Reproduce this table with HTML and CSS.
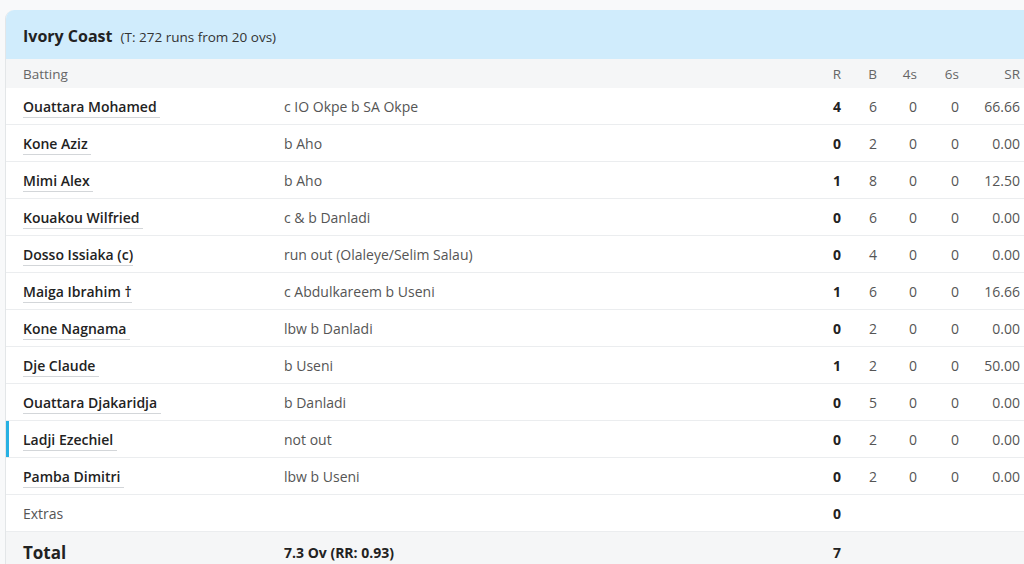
FILE: index.html
```html
<!DOCTYPE html>
<html lang="en">

<head>
    <meta charset="UTF-8">
    <meta name="viewport" content="width=device-width, initial-scale=1.0">
    <link rel="stylesheet" href="styles.css">
</head>

<body>
    <div class="card">
        <div class="card-head">
            <span class="team">Ivory Coast</span>
            <span class="target">(T: 272 runs from 20 ovs)</span>
        </div>
        <table class="score">
            <thead>
                <tr>
                    <th class="name">Batting</th>
                    <th class="how"></th>
                    <th class="r">R</th>
                    <th class="b">B</th>
                    <th class="f">4s</th>
                    <th class="s">6s</th>
                    <th class="sr">SR</th>
                </tr>
            </thead>
            <tbody>
                <tr>
                    <td class="name"><a href="#">Ouattara Mohamed&nbsp;</a></td>
                    <td class="how">c IO Okpe b SA Okpe</td>
                    <td class="r">4</td><td class="b">6</td><td class="f">0</td><td class="s">0</td><td class="sr">66.66</td>
                </tr>
                <tr>
                    <td class="name"><a href="#">Kone Aziz&nbsp;</a></td>
                    <td class="how">b Aho</td>
                    <td class="r">0</td><td class="b">2</td><td class="f">0</td><td class="s">0</td><td class="sr">0.00</td>
                </tr>
                <tr>
                    <td class="name"><a href="#">Mimi Alex&nbsp;</a></td>
                    <td class="how">b Aho</td>
                    <td class="r">1</td><td class="b">8</td><td class="f">0</td><td class="s">0</td><td class="sr">12.50</td>
                </tr>
                <tr>
                    <td class="name"><a href="#">Kouakou Wilfried&nbsp;</a></td>
                    <td class="how">c &amp; b Danladi</td>
                    <td class="r">0</td><td class="b">6</td><td class="f">0</td><td class="s">0</td><td class="sr">0.00</td>
                </tr>
                <tr>
                    <td class="name"><a href="#">Dosso Issiaka (c)</a></td>
                    <td class="how">run out (Olaleye/Selim Salau)</td>
                    <td class="r">0</td><td class="b">4</td><td class="f">0</td><td class="s">0</td><td class="sr">0.00</td>
                </tr>
                <tr>
                    <td class="name"><a href="#">Maiga Ibrahim &dagger;</a></td>
                    <td class="how">c Abdulkareem b Useni</td>
                    <td class="r">1</td><td class="b">6</td><td class="f">0</td><td class="s">0</td><td class="sr">16.66</td>
                </tr>
                <tr>
                    <td class="name"><a href="#">Kone Nagnama&nbsp;</a></td>
                    <td class="how">lbw b Danladi</td>
                    <td class="r">0</td><td class="b">2</td><td class="f">0</td><td class="s">0</td><td class="sr">0.00</td>
                </tr>
                <tr>
                    <td class="name"><a href="#">Dje Claude&nbsp;</a></td>
                    <td class="how">b Useni</td>
                    <td class="r">1</td><td class="b">2</td><td class="f">0</td><td class="s">0</td><td class="sr">50.00</td>
                </tr>
                <tr>
                    <td class="name"><a href="#">Ouattara Djakaridja&nbsp;</a></td>
                    <td class="how">b Danladi</td>
                    <td class="r">0</td><td class="b">5</td><td class="f">0</td><td class="s">0</td><td class="sr">0.00</td>
                </tr>
                <tr class="at-crease">
                    <td class="name"><a href="#">Ladji Ezechiel&nbsp;</a></td>
                    <td class="how">not out</td>
                    <td class="r">0</td><td class="b">2</td><td class="f">0</td><td class="s">0</td><td class="sr">0.00</td>
                </tr>
                <tr>
                    <td class="name"><a href="#">Pamba Dimitri&nbsp;</a></td>
                    <td class="how">lbw b Useni</td>
                    <td class="r">0</td><td class="b">2</td><td class="f">0</td><td class="s">0</td><td class="sr">0.00</td>
                </tr>
                <tr class="extras">
                    <td class="name">Extras</td>
                    <td class="how"></td>
                    <td class="r">0</td><td></td><td></td><td></td><td></td>
                </tr>
                <tr class="total">
                    <td class="name">Total</td>
                    <td class="how">7.3 Ov (RR: 0.93)</td>
                    <td class="r">7</td><td></td><td></td><td></td><td></td>
                </tr>
            </tbody>
        </table>
    </div>
</body>

</html>
```

FILE: styles.css
```css
body {
    margin: 0;
    padding: 10px 0 0 5px;
    background-color: #f8f9fa;
    font-family: 'Open Sans', 'Segoe UI', sans-serif;
    color: #333;
    overflow: hidden;
}

.card {
    width: 1040px;
    background-color: #fff;
    border-left: 1px solid #e3e6e8;
    border-radius: 9px 0 0 0;
    overflow: hidden;
}

.card-head {
    display: flex;
    align-items: baseline;
    gap: 8px;
    height: 49px;
    padding: 15px 0 0 17px;
    box-sizing: border-box;
    background-color: #d0ecfc;
}

.team {
    font-size: 16px;
    font-weight: 700;
    color: #222;
}

.target {
    font-size: 13.5px;
    color: #333;
}

.score {
    width: 100%;
    border-collapse: collapse;
    font-size: 14px;
}

.score th {
    height: 29px;
    padding: 0;
    background-color: #f5f6f7;
    font-weight: 400;
    font-size: 13.5px;
    color: #666;
    text-align: right;
}

.score td {
    height: 36px;
    padding: 0;
    border-bottom: 1px solid #ebedef;
    color: #555;
    text-align: right;
}

.score .name {
    width: 261px;
    padding-left: 17px;
    text-align: left;
}

.score .how {
    text-align: left;
}

.score .r {
    width: 40px;
}

.score td.r {
    font-weight: 700;
    color: #222;
}

.score .b {
    width: 36px;
}

.score .f {
    width: 40px;
}

.score .s {
    width: 42px;
}

.score .sr {
    width: 61px;
    padding-right: 26px;
}

.score td.name a {
    color: #222;
    font-weight: 600;
    text-decoration: none;
    border-bottom: 1px solid #d3d6d9;
    padding-bottom: 1px;
}

.at-crease td.name {
    box-shadow: inset 3px 0 0 #27b1e3;
}

.score .extras td.name {
    color: #555;
}

.score .total td {
    height: 40px;
    background-color: #f5f6f7;
    border-bottom: none;
    color: #222;
    font-weight: 700;
}

.score .total td.name {
    font-size: 17px;
}
```
